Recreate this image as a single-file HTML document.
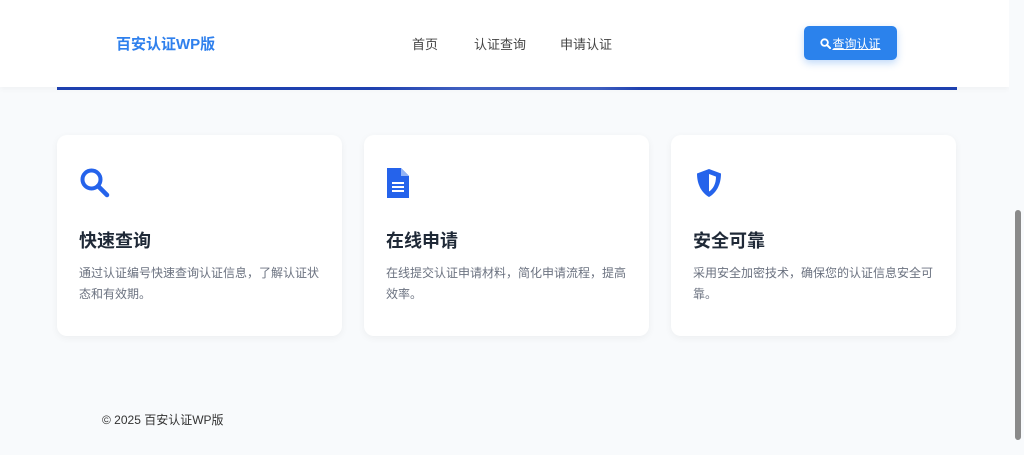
<!DOCTYPE html>
<html><head><meta charset="utf-8"><style>
*{margin:0;padding:0;box-sizing:border-box}
body{width:1024px;height:455px;overflow:hidden;background:#f8fafc;font-family:"Liberation Sans","Noto Sans CJK SC",sans-serif;position:relative}
.hdr{position:absolute;left:0;top:0;width:1009px;height:87px;background:#fff;box-shadow:0 2px 6px rgba(0,0,0,.04)}
.logo{position:absolute;left:116px;top:33px;font-size:15px;font-weight:bold;color:#2f80ed}
.nav{position:absolute;top:34px;font-size:13px;color:#444}
.btn{position:absolute;left:804px;top:26px;width:93px;height:34px;background:#2b82ec;border-radius:5px;color:#fff;font-size:12px;text-decoration:underline;display:flex;align-items:center;justify-content:center;box-shadow:0 3px 8px rgba(43,130,236,.3)}
.bar{position:absolute;left:57px;top:87px;width:900px;height:3px;background:linear-gradient(90deg,#1e40af 0%,#1e40af 35%,#3f5fc0 45%,#3f5fc0 60%,#1e40af 65%,#1e40af 100%)}
.card{position:absolute;top:135px;width:285px;height:201px;background:#fff;border-radius:10px;box-shadow:0 2px 8px rgba(0,0,0,.05)}
.card svg{position:absolute;left:22px;top:32px}
.card h3{position:absolute;left:22px;top:92px;font-size:18px;color:#1f2937;font-weight:bold}
.card p{position:absolute;left:22px;top:128px;width:250px;font-size:12px;line-height:21px;color:#6b7280}
.foot{position:absolute;left:102px;top:411px;font-size:12px;color:#333}
.sb{position:absolute;left:1009px;top:0;width:15px;height:455px;background:#f8fafc}
.th{position:absolute;left:1015px;top:210px;width:6px;height:230px;background:#8a8a8a;border-radius:3px}
</style></head><body>
<div class="hdr">
<div class="logo">百安认证WP版</div>
<div class="nav" style="left:412px">首页</div>
<div class="nav" style="left:474px">认证查询</div>
<div class="nav" style="left:560px">申请认证</div>
<div class="btn"><svg width="11" height="11" viewBox="0 0 12 12" style="margin-right:1px"><circle cx="5" cy="5" r="3.6" fill="none" stroke="#fff" stroke-width="2"/><path d="M7.6 7.6L11 11" stroke="#fff" stroke-width="2.2" stroke-linecap="round"/></svg>查询认证</div>
</div>
<div class="bar"></div>
<div class="card" style="left:57px">
<svg width="32" height="32" viewBox="0 0 32 32"><circle cx="12.5" cy="12.5" r="9" fill="none" stroke="#2563eb" stroke-width="4"/><path d="M19 19L28 28" stroke="#2563eb" stroke-width="4.5" stroke-linecap="round"/></svg>
<h3>快速查询</h3><p>通过认证编号快速查询认证信息，了解认证状态和有效期。</p></div>
<div class="card" style="left:364px">
<svg width="24" height="32" viewBox="0 0 24 32"><path d="M1 1H15L23 9V31H1Z" fill="#2563eb"/><path d="M15 1V9H23" fill="#93b4f5"/><path d="M6 16H18M6 20H18M6 24H18" stroke="#fff" stroke-width="2"/></svg>
<h3>在线申请</h3><p>在线提交认证申请材料，简化申请流程，提高效率。</p></div>
<div class="card" style="left:671px">
<svg width="32" height="32" viewBox="0 0 32 32"><path d="M16 2L28 6.5C28 18 23 26 16 30C9 26 4 18 4 6.5Z" fill="#2563eb"/><path d="M16 7L23 9.6C23 17 20 22 16 24.5Z" fill="#fff"/></svg>
<h3>安全可靠</h3><p>采用安全加密技术，确保您的认证信息安全可靠。</p></div>
<div class="foot">© 2025 百安认证WP版</div>
<div class="sb"></div><div class="th"></div>
</body></html>
